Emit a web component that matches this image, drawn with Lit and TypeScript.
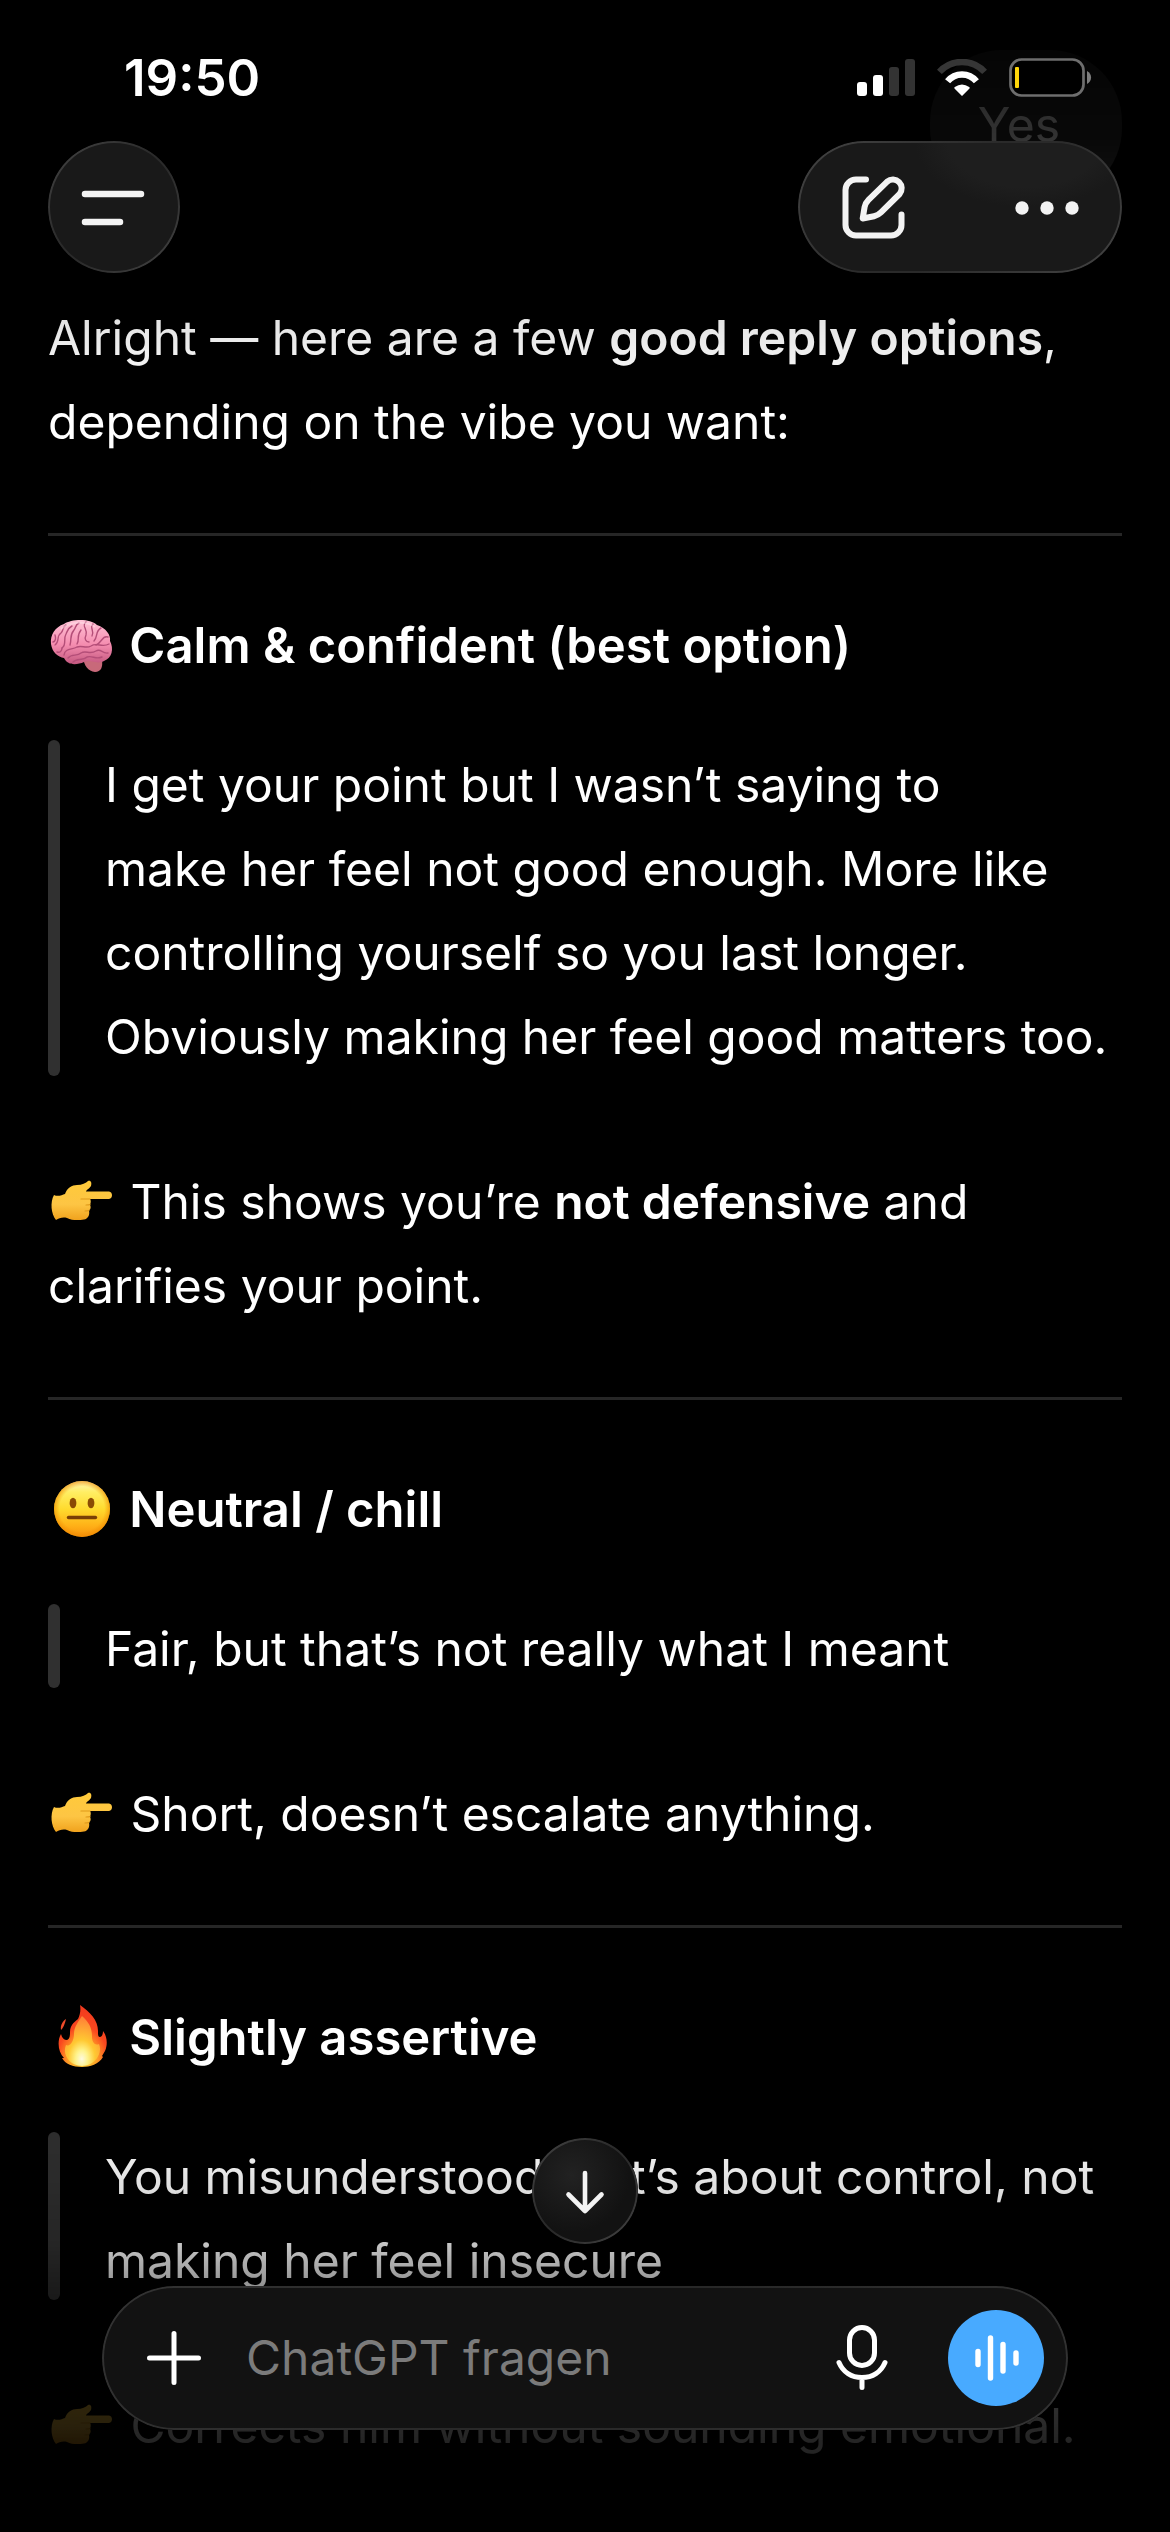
import { LitElement, html, css, svg } from 'lit'
import { customElement, property, state } from 'lit/decorators.js';

export type EmojiName = 'brain' | 'neutral' | 'fire' | 'point';

export interface ReplyOption {
  emoji: EmojiName;
  title: string;
  quote: string;
  note: unknown;
}

const REPLY_OPTIONS: ReplyOption[] = [
  {
    emoji: 'brain',
    title: 'Calm & confident (best option)',
    quote: 'I get your point but I wasn’t saying to\nmake her feel not good enough. More like controlling yourself so you last longer.\nObviously making her feel good matters too.',
    note: html`This shows you’re <strong>not defensive</strong> and clarifies your point.`,
  },
  {
    emoji: 'neutral',
    title: 'Neutral / chill',
    quote: 'Fair, but that’s not really what I meant',
    note: 'Short, doesn’t escalate anything.',
  },
  {
    emoji: 'fire',
    title: 'Slightly assertive',
    quote: 'You misunderstood — it’s about control, not making her feel insecure',
    note: 'Corrects him without sounding emotional.',
  },
];

const EMOJI_ART = {
  brain: svg`
    <defs>
      <linearGradient id="pink" x1="0" y1="0" x2="0" y2="1">
        <stop offset="0" stop-color="#ffc3d6" />
        <stop offset="0.55" stop-color="#f58db0" />
        <stop offset="1" stop-color="#c4587f" />
      </linearGradient>
    </defs>
    <path d="M35 46 C36 55 40 60 47 61 C53 61 55 56 54 49 Z" fill="#c8697a" />
    <path d="M3 33 C2 24 7 16 16 13 C23 8 42 7 49 14 C58 17 63 24 62 30 C66 38 64 47 56 50 C48 54 43 48 36 51 C29 54 20 55 16 47 C10 46 4 41 3 33 Z" fill="url(#pink)" />
    <g fill="none" stroke="#b44e78" stroke-width="1.4" stroke-linecap="round">
      <path d="M7 34 C12 31 8 25 13 22 C16 19 14 16 18 14" />
      <path d="M14 37 C19 34 15 28 18 23 C20 19 20 17 24 15" />
      <path d="M22 34 C24 28 21 25 26 19 C28 17 27 14 31 12" />
      <path d="M29 33 C32 28 28 25 33 19 M38 11 C33 15 40 18 38 24 C36 28 38 31 41 31" />
      <path d="M45 13 C41 17 47 20 44 25 M53 17 C47 20 50 26 46 30 M60 26 C54 24 54 32 48 34" />
      <path d="M16 44 C17 37 24 39 29 36 C34 34 38 38 43 35 C49 31 54 37 61 33" />
      <path d="M20 47 C24 42 29 46 33 42 C38 39 42 44 48 40 C53 37 54 43 60 42" />
      <path d="M25 51 C29 47 35 50 39 46 C44 44 48 49 54 46" />
      <path d="M5 31 C8 30 8 27 7 24 M9 41 C12 42 14 40 14 37" />
    </g>
    <path d="M13 18 C21 11 38 9 47 16" fill="none" stroke="#ffe1ea" stroke-width="2" opacity="0.5" />
  `,
  neutral: svg`
    <defs>
      <linearGradient id="face" x1="0" y1="0" x2="0" y2="1">
        <stop offset="0" stop-color="#fff6b8" />
        <stop offset="0.2" stop-color="#ffee63" />
        <stop offset="0.5" stop-color="#ffdb2e" />
        <stop offset="0.8" stop-color="#ffb017" />
        <stop offset="1" stop-color="#f7920c" />
      </linearGradient>
      <radialGradient id="rim">
        <stop offset="0.8" stop-color="#f08a00" stop-opacity="0" />
        <stop offset="1" stop-color="#f08a00" stop-opacity="0.65" />
      </radialGradient>
    </defs>
    <circle cx="34" cy="34" r="28" fill="url(#face)" />
    <circle cx="34" cy="34" r="28" fill="url(#rim)" />
    <ellipse cx="25" cy="28" rx="3.4" ry="5.2" fill="#8a4b04" />
    <ellipse cx="43" cy="28" rx="3.4" ry="5.2" fill="#8a4b04" />
    <path d="M20.5 42.5 H47.5" stroke="#7a3f05" stroke-width="3.4" stroke-linecap="round" />
  `,
  fire: svg`
    <defs>
      <radialGradient id="outer" cx="0.5" cy="0.88" r="0.85">
        <stop offset="0" stop-color="#ffd83a" />
        <stop offset="0.35" stop-color="#ffa026" />
        <stop offset="0.62" stop-color="#f9481f" />
        <stop offset="1" stop-color="#f23a1e" />
      </radialGradient>
      <radialGradient id="inner" cx="0.48" cy="0.86" r="0.8">
        <stop offset="0" stop-color="#fffbe0" />
        <stop offset="0.22" stop-color="#fff38a" />
        <stop offset="0.48" stop-color="#ffc832" />
        <stop offset="1" stop-color="#ff8636" />
      </radialGradient>
    </defs>
    <path d="M32 2 C42 9 50 17 50 28 C50 32 50 34 52 34 C54 34 55 31 55 28 C59 33 60 41 57 48 L54 53 L55 54 C51 61 42 64 34 64 C25 64 17 61 14 55 L16 55 C10 49 9 38 13 31 C14 35 16 37 19 37 C22 36 22 32 22 29 C22 21 28 18 30 16 C32 12 33 7 32 2 Z" fill="url(#outer)" />
    <path d="M18 16 C17 21 15 25 13 27 C12 22 15 18 18 16 Z" fill="#ef4b2a" />
    <path d="M34 13 C42 20 44 26 44 34 C44 39 47 43 51 41 C55 50 47 63 34 63 C21 63 14 51 18 42 C22 44 26 38 26 31 C26 24 30 19 34 13 Z" fill="url(#inner)" />
  `,
  point: svg`
    <defs>
      <linearGradient id="skin" x1="0" y1="0" x2="0" y2="1">
        <stop offset="0" stop-color="#ffca3a" />
        <stop offset="0.6" stop-color="#fdc544" />
        <stop offset="1" stop-color="#f0a21d" />
      </linearGradient>
    </defs>
    <path d="M6 28 C10 30 14 28 17 27 C19 21 24 18 29 18 C34 18 38 16 40 14 C43 13 44 16 43 19 C41 22 38 23 38 24.5 H61 C65 25 65 31.5 61 32 H42 C43 33 43 36 42 37.5 C43 40 43 42 41 43.5 C42 48 40 52 36 52.5 C30 53.5 24 53.5 19 51 C15 50 11 51 8 53 C3 47 2 35 6 28 Z" fill="url(#skin)" />
    <path d="M42 32 H33 M42 37.5 C41 38 39 38 38 38 M41 43.5 C39 44 38 44 37 44" fill="none" stroke="#e09a1a" stroke-width="1.2" stroke-linecap="round" />
  `,
};

/**
 * @element chat-emoji
 * @summary Emoji drawn inline with the surrounding text.
 */
@customElement('chat-emoji')
export class ChatEmoji extends LitElement {
  @property({ type: String }) name: EmojiName = 'point';

  static override styles = css`
    :host {
      display: inline-block;
      width: 66px;
      height: 66px;
      margin-right: 3px;
      line-height: 0;
      vertical-align: -14px;
    }

    svg { width: 100%; height: 100%; }
  `;

  override render() {
    return html`<svg viewBox="0 0 66 66" aria-hidden="true">${EMOJI_ART[this.name]}</svg>`;
  }
}

/**
 * @element status-bar
 * @summary Clock, signal, wifi and battery.
 */
@customElement('status-bar')
export class StatusBar extends LitElement {
  @property({ type: String }) time = '';

  static override styles = css`
    :host {
      display: flex;
      align-items: center;
      justify-content: space-between;
      padding: 47px 78px 0 124px;
      line-height: 62px;
      font-size: 51px;
      font-weight: 600;
    }

    .icons {
      display: flex;
      align-items: center;
      gap: 22px;
    }

    svg { display: block; }
  `;

  override render() {
    return html`
      <time>${this.time}</time>
      <div class="icons">
        <svg width="58" height="38" viewBox="0 0 58 38" fill="#fff" role="img" aria-label="Signal">
          <rect x="0" y="23" width="10" height="14" rx="3" />
          <rect x="16" y="16" width="10" height="21" rx="3" />
          <rect x="32" y="8" width="10" height="29" rx="3" fill="#333" />
          <rect x="48" y="0" width="10" height="37" rx="3" fill="#333" />
        </svg>
        <svg width="50" height="38" viewBox="0 0 50 38" fill="none" stroke-width="6.5" role="img" aria-label="WLAN">
          <path d="M2.4 12.9 A30.7 30.7 0 0 1 47.6 12.9" stroke="#363636" />
          <path d="M10.6 22.3 A18.6 18.6 0 0 1 39.4 22.3" stroke="#fff" />
          <path d="M25 37 L17.5 29.6 Q16.8 28.7 17.8 28 Q25 22.8 32.2 28 Q33.2 28.7 32.5 29.6 Z" fill="#fff" />
        </svg>
        <svg width="83" height="40" viewBox="0 0 83 40" role="img" aria-label="Batterie">
          <rect x="1.5" y="1.5" width="73" height="36" rx="11" fill="#000" stroke="#6e6e6e" stroke-width="2.7" />
          <rect x="6" y="9" width="4" height="21" rx="1" fill="#ffd60a" />
          <path d="M78 13 C83.4 15.5 83.4 23.5 78 26 Z" fill="#7d7d7d" />
        </svg>
      </div>
    `;
  }
}

@customElement('app-root')
export class AppRoot extends LitElement {
  @state() private _draft = '';

  static override styles = css`
    :host {
      display: block;
      position: relative;
      height: 100vh;
      overflow: hidden;
      background: #000;
      color: #fff;
      font-family: Inter, 'Liberation Sans', sans-serif;
      font-size: 48px;
      line-height: 84px;
    }

    * { box-sizing: border-box; }

    button {
      display: grid;
      place-items: center;
      padding: 0;
      border: 0;
      background: none;
      color: #f3f3f3;
      font: inherit;
      cursor: pointer;
    }

    svg { display: block; }

    h2, p, blockquote { margin: 0; }

    strong { font-weight: 600; }

    /* Top controls */
    header {
      position: absolute;
      inset: 0 0 auto;
    }

    nav {
      display: flex;
      justify-content: space-between;
      padding: 32px 48px 0;
    }

    .glass {
      position: relative;
      border-radius: 72px;
      background: #191919;
    }

    /* Rim that catches light on two opposite corners */
    .glass::after {
      content: '';
      position: absolute;
      inset: 0;
      padding: 2px;
      border-radius: inherit;
      background: linear-gradient(135deg, #444, #2a2a2a 45%, #2a2a2a 55%, #444);
      mask: linear-gradient(#000 0 0) content-box exclude, linear-gradient(#000 0 0);
      pointer-events: none;
    }

    .menu {
      width: 132px;
      height: 132px;
    }

    .actions {
      display: flex;
      gap: 24px;
      background: radial-gradient(ellipse 110px 66px at 70% 0, #1e1e1e 70%, #191919);
    }

    .actions button {
      width: 150px;
      height: 132px;
    }

    /* Conversation */
    main {
      height: 100%;
      padding: 50px 48px 0;
      overflow: hidden;
      mask-image: linear-gradient(
        to bottom,
        rgb(0 0 0 / 0.12) 50px,
        rgb(0 0 0 / 0.2) 140px,
        rgb(0 0 0 / 0.88) 310px,
        #000 400px,
        #000 calc(100% - 480px),
        rgb(0 0 0 / 0.92) calc(100% - 370px),
        rgb(0 0 0 / 0.78) calc(100% - 290px),
        rgb(0 0 0 / 0.6) calc(100% - 252px),
        rgb(0 0 0 / 0.2) calc(100% - 140px),
        rgb(0 0 0 / 0.14) calc(100% - 90px)
      );
    }

    .bubble {
      width: fit-content;
      margin: 0 0 96px auto;
      padding: 33px 62px 33px 48px;
      border-radius: 72px;
      background: #2a2a2a;
    }

    .divider {
      height: 3px;
      margin: 69px 0 68px;
      border: 0;
      background: #262626;
    }

    h2 {
      font-size: 49px;
      font-weight: 600;
    }

    blockquote {
      position: relative;
      margin: 52px 0 81px;
      padding: 3px 0 0 57px;
      white-space: pre-line;
    }

    blockquote::before {
      content: '';
      position: absolute;
      inset: 0 auto 3px 0;
      width: 12px;
      border-radius: 6px;
      background: #303030;
    }

    /* Composer */
    footer {
      position: absolute;
      inset: auto 102px 102px;
      display: flex;
      flex-direction: column;
      align-items: center;
      gap: 42px;
    }

    .scroll {
      width: 106px;
      height: 106px;
      background: radial-gradient(circle at 38% 35%, #222, #121212 60%);
    }

    .composer {
      display: flex;
      align-items: center;
      width: 100%;
      height: 144px;
      padding: 0 24px;
      background: #121212;
    }

    .composer::after {
      background: linear-gradient(135deg, #333, #282828 45%, #282828 55%, #333);
    }

    .composer button { color: #fff; }

    .add, .mic, .voice {
      flex: none;
      width: 96px;
      height: 96px;
    }

    .mic { margin-right: 38px; }

    .composer .voice {
      border-radius: 50%;
      background: #48aaff;
    }

    input {
      flex: 1;
      min-width: 0;
      padding: 0 24px;
      border: 0;
      outline: none;
      background: none;
      color: #fff;
      font: inherit;
    }

    input::placeholder {
      color: #7b7b7b;
      opacity: 1;
    }
  `;

  private _handleInput(e: Event) {
    this._draft = (e.target as HTMLInputElement).value;
  }

  private _handleSubmit(e: Event) {
    e.preventDefault();
    this._draft = '';
  }

  private _renderOption(option: ReplyOption) {
    return html`
      <hr class="divider" />
      <h2><chat-emoji name=${option.emoji}></chat-emoji> ${option.title}</h2>
      <blockquote>${option.quote}</blockquote>
      <p><chat-emoji name="point"></chat-emoji> ${option.note}</p>
    `;
  }

  override render() {
    return html`
      <main>
        <p class="bubble">Yes</p>
        <p>Alright — here are a few <strong>good reply options</strong>, depending on the vibe you want:</p>
        ${REPLY_OPTIONS.map((option) => this._renderOption(option))}
      </main>

      <header>
        <status-bar time="19:50"></status-bar>
        <nav>
          <button class="glass menu" aria-label="Menü">
            <svg width="132" height="132" viewBox="0 0 132 132" fill="none" stroke="currentColor" stroke-width="6.5" stroke-linecap="round">
              <path d="M37 53 H93 M37 81 H72" />
            </svg>
          </button>
          <div class="glass actions">
            <button aria-label="Neuer Chat">
              <svg width="63" height="63" viewBox="0 0 63 63" fill="none" stroke="currentColor" stroke-width="6" stroke-linecap="round" stroke-linejoin="round">
                <path d="M24 3.5 H14 A10.5 10.5 0 0 0 3.5 14 V49 A10.5 10.5 0 0 0 14 59.5 H49 A10.5 10.5 0 0 0 59.5 49 V38.5" />
                <path d="M20.7 42.5 L22.6 31 Q23.3 27 26.5 23.8 L45.2 5.6 A8.8 8.8 0 0 1 57.6 18 L39 36.4 Q36 39.3 32 40.2 Z" />
              </svg>
            </button>
            <button aria-label="Mehr">
              <svg width="64" height="16" viewBox="0 0 64 16" fill="currentColor">
                <circle cx="7" cy="9" r="6.7" />
                <circle cx="32" cy="9" r="6.7" />
                <circle cx="57" cy="9" r="6.7" />
              </svg>
            </button>
          </div>
        </nav>
      </header>

      <footer>
        <button class="glass scroll" aria-label="Nach unten">
          <svg width="106" height="106" viewBox="0 0 106 106" fill="none" stroke="currentColor" stroke-width="4.6" stroke-linecap="round" stroke-linejoin="round">
            <path d="M53 35 V73 M36.5 56.5 L53 73 L69.5 56.5" />
          </svg>
        </button>
        <form class="glass composer" @submit=${this._handleSubmit}>
          <button class="add" type="button" aria-label="Hinzufügen">
            <svg width="54" height="54" viewBox="0 0 54 54" fill="none" stroke="currentColor" stroke-width="5" stroke-linecap="round">
              <path d="M27 2.5 V51.5 M2.5 27 H51.5" />
            </svg>
          </button>
          <input
            type="text"
            aria-label="Nachricht"
            placeholder="ChatGPT fragen"
            .value=${this._draft}
            @input=${this._handleInput}
          />
          <button class="mic" type="button" aria-label="Diktieren">
            <svg width="52" height="66" viewBox="0 0 52 66" fill="none" stroke="currentColor" stroke-width="5" stroke-linecap="round">
              <rect x="13.5" y="2.5" width="25" height="38" rx="12.5" />
              <path d="M3 37.5 C7 47 15.5 52.5 26 52.5 C36.5 52.5 45 47 49 37.5 M26 53 V62.5" />
            </svg>
          </button>
          <button class="voice" type="submit" aria-label="Sprachmodus">
            <svg width="96" height="96" viewBox="0 0 96 96" fill="none" stroke="currentColor" stroke-width="5.4" stroke-linecap="round">
              <path d="M30 41.5 V54.5 M42.5 28 V68 M55 34.5 V61 M68 43 V53" />
            </svg>
          </button>
        </form>
      </footer>
    `;
  }
}

declare global {
  interface HTMLElementTagNameMap {
    'app-root': AppRoot;
    'chat-emoji': ChatEmoji;
    'status-bar': StatusBar;
  }
}
